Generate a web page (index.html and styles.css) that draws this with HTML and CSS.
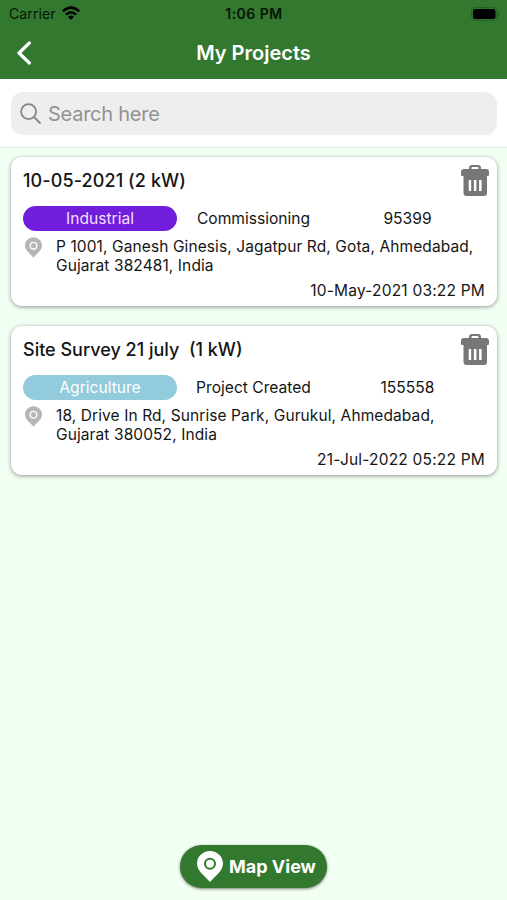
FILE: index.html
```html
<!DOCTYPE html>
<html lang="en">
<head>
<meta charset="utf-8">
<title>My Projects</title>
<link rel="stylesheet" href="styles.css">
</head>
<body>
<svg class="defs" aria-hidden="true">
  <symbol id="pin" viewBox="0 0 26 31"><path fill-rule="evenodd" d="M13 0C5.8 0 0 5.6 0 12.4C0 20 7.5 24.5 13 31C18.500 24.500 26 20 26 12.400C26 5.600 20.200 0 13 0ZM13 6.800a6 6 0 1 1 0 12a6 6 0 1 1 0-12ZM13 8.800a4 4 0 1 0 0 8a4 4 0 1 0 0-8Z"/></symbol>
  <symbol id="trash" viewBox="0 0 28 31"><path fill-rule="evenodd" d="M8 4V3Q8 0 11 0H17Q20 0 20 3V4H25Q28 4 28 7V10Q28 11 27 11H26V28Q26 31 23 31H5.500Q2.500 31 2.500 28V11H1Q0 11 0 10V7Q0 4 3 4ZM10.500 4H17.500V3Q17.500 2 16.500 2H11.500Q10.500 2 10.500 3ZM7.700 15V26H10.200V15ZM12.900 15V26H15.400V15ZM18.100 15V26H20.600V15Z"/></symbol>
</svg>
<div class="app">
  <header class="header">
    <div class="status">
      <div class="carrier"><span>Carrier</span>
        <svg class="wifi" viewBox="0 0 18 14"><path d="M0 4.400Q9-4 18 4.400L16.200 6.300Q9-.2 1.800 6.300ZM3 7.700Q9 2.300 15 7.700L13.200 9.500Q9 6 4.800 9.500ZM6 10.700Q9 8.300 12 10.700L9 14Z"/></svg>
      </div>
      <span class="time">1:06 PM</span>
      <svg class="battery" viewBox="0 0 30 14"><rect x=".6" y=".6" width="25.500" height="12.800" rx="4" fill="none" stroke="#246022"/><rect x="2" y="2" width="22.500" height="10" rx="2.500"/><path d="M27.500 4.800Q30 7 27.500 9Z" fill="#205a1f"/></svg>
    </div>
    <div class="nav">
      <svg class="back" viewBox="0 0 14 24"><path d="M12.400 2L2 12L12.400 22"/></svg>
      <h1>My Projects</h1>
    </div>
  </header>
  <div class="search-bar">
    <div class="search">
      <svg viewBox="0 0 21 21"><circle cx="8.600" cy="8.600" r="7.500"/><path d="M14 14L20 20"/></svg>
      <span>Search here</span>
    </div>
  </div>
  <main class="list">
    <article class="card">
      <div class="top"><h2 class="date-title">10-05-2021 (2 kW)</h2><svg class="trash"><use href="#trash"/></svg></div>
      <div class="row"><span class="tag industrial">Industrial</span><span class="stage">Commissioning</span><span class="number">95399</span></div>
      <div class="place"><svg class="pin"><use href="#pin"/></svg><p>P 1001, Ganesh Ginesis, Jagatpur Rd, Gota, Ahmedabad,<br>Gujarat 382481, India</p></div>
      <time>10-May-2021 03:22 PM</time>
    </article>
    <article class="card">
      <div class="top"><h2>Site Survey 21 july&nbsp; (1 kW)</h2><svg class="trash"><use href="#trash"/></svg></div>
      <div class="row"><span class="tag agriculture">Agriculture</span><span class="stage">Project Created</span><span class="number">155558</span></div>
      <div class="place"><svg class="pin"><use href="#pin"/></svg><p>18, Drive In Rd, Sunrise Park, Gurukul, Ahmedabad,<br>Gujarat 380052, India</p></div>
      <time>21-Jul-2022 05:22 PM</time>
    </article>
  </main>
  <footer class="footer"><button class="map"><svg><use href="#pin"/></svg><span>Map View</span></button></footer>
</div>
</body>
</html>
```
FILE: styles.css
```css
* { box-sizing: border-box; }
body { margin: 0; font-family: Inter, sans-serif; color: #151515; }
h1, h2, p { margin: 0; }
svg { display: block; flex: none; }
.defs { position: absolute; width: 0; height: 0; }
.app { height: 900px; display: flex; flex-direction: column; background: #f2fff3; overflow: hidden; }
.header { height: 79px; background: #33782f; }
.status { height: 27px; padding: 0 8px 0 9px; display: grid; grid-template-columns: 1fr auto 1fr; align-items: center; color: #071506; }
.carrier { display: flex; align-items: center; gap: 6px; font-size: 14px; letter-spacing: .1px; }
.wifi { width: 18px; height: 14px; margin-top: -2px; fill: #000; }
.time { font-size: 14px; font-weight: 600; letter-spacing: .5px; }
.battery { width: 30px; height: 14px; justify-self: end; margin-right: -8px; transform: translateX(-6px); }
.nav { height: 52px; padding: 0 17px; display: grid; grid-template-columns: 14px 1fr 14px; align-items: center; }
.back { width: 14px; height: 24px; margin-top: -1px; fill: none; stroke: #fff; stroke-width: 3.200; stroke-linecap: round; stroke-linejoin: round; }
h1 { color: #fff; font-size: 20px; font-weight: 600; text-align: center; }
.search-bar { height: 69px; padding: 13px 10px 12px 11px; background: #fff; border-bottom: 1px solid #dcebdc; }
.search { height: 43px; border-radius: 12px; background: #eee; display: flex; align-items: center; padding: 0 9px; gap: 7px; color: #929292; font-size: 20px; letter-spacing: -.25px; }
.search svg { width: 21px; height: 21px; fill: none; stroke: #858585; stroke-width: 1.800; stroke-linecap: round; }
.list { flex: 1; padding: 9px 10px 0 11px; display: flex; flex-direction: column; gap: 20px; }
.card { height: 149px; padding: 8px 8px 0 12px; border-radius: 11px; background: #fff; box-shadow: 0 1px 4px rgba(0,0,0,.42); }
.top { display: flex; justify-content: space-between; height: 41px; }
h2 { font-size: 18px; line-height: 32px; font-weight: 550; white-space: nowrap; }
.date-title { letter-spacing: .1px; }
.trash { width: 28px; height: 31px; fill: #777; }
.row { display: grid; grid-template-columns: 154px 153px 155px; align-items: center; height: 25px; font-size: 15.600px; text-align: center; }
.tag { height: 25px; line-height: 25px; border-radius: 13px; color: #fff; }
.industrial { background: #711edc; color: #f1deff; }
.agriculture { background: #91cbdc; }
.place { display: flex; gap: 14px; padding: 6px 0 0 2px; height: 50px; font-size: 15.500px; line-height: 19px; letter-spacing: .1px; white-space: nowrap; }
.pin { width: 17px; height: 21px; fill: #b6b6b6; }
.card time { display: block; text-align: right; padding-right: 4px; font-size: 15.500px; line-height: 20px; letter-spacing: .2px; }
.footer { height: 56px; display: flex; justify-content: center; align-items: flex-start; }
.map { width: 147px; height: 43px; margin: 1px 0 0; padding: 0 11px 0 17px; border: 0; border-radius: 22px; background: #33782f; display: flex; align-items: center; gap: 6px; color: #fff; font: 700 18px Inter, sans-serif; white-space: nowrap; box-shadow: 0 1px 3px rgba(0,0,0,.5); }
.map svg { width: 26px; height: 31px; fill: #fff; }
```
